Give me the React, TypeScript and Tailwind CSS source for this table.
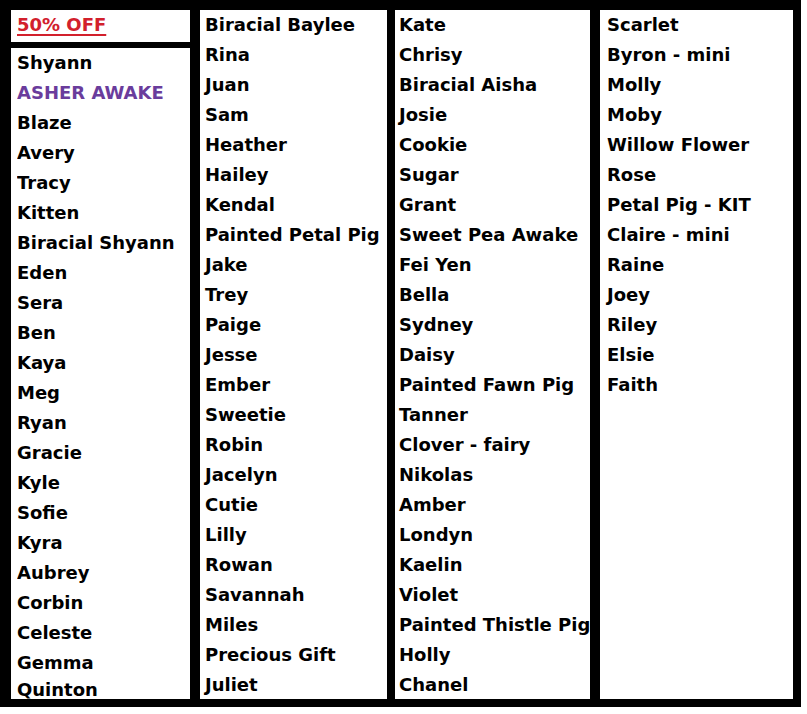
const col1 = ['Shyann', 'ASHER AWAKE', 'Blaze', 'Avery', 'Tracy', 'Kitten', 'Biracial Shyann', 'Eden', 'Sera', 'Ben', 'Kaya', 'Meg', 'Ryan', 'Gracie', 'Kyle', 'Sofie', 'Kyra', 'Aubrey', 'Corbin', 'Celeste', 'Gemma', 'Quinton']
const col2 = ['Biracial Baylee', 'Rina', 'Juan', 'Sam', 'Heather', 'Hailey', 'Kendal', 'Painted Petal Pig', 'Jake', 'Trey', 'Paige', 'Jesse', 'Ember', 'Sweetie', 'Robin', 'Jacelyn', 'Cutie', 'Lilly', 'Rowan', 'Savannah', 'Miles', 'Precious Gift', 'Juliet']
const col3 = ['Kate', 'Chrisy', 'Biracial Aisha', 'Josie', 'Cookie', 'Sugar', 'Grant', 'Sweet Pea Awake', 'Fei Yen', 'Bella', 'Sydney', 'Daisy', 'Painted Fawn Pig', 'Tanner', 'Clover - fairy', 'Nikolas', 'Amber', 'Londyn', 'Kaelin', 'Violet', 'Painted Thistle Pig', 'Holly', 'Chanel']
const col4 = ['Scarlet', 'Byron - mini', 'Molly', 'Moby', 'Willow Flower', 'Rose', 'Petal Pig - KIT', 'Claire - mini', 'Raine', 'Joey', 'Riley', 'Elsie', 'Faith']

function Names({ items, pad }: { items: string[]; pad: string }) {
  return (
    <ul className={`${pad} overflow-hidden`}>
      {items.map((n) => (
        <li
          key={n}
          className={`h-[30px] leading-[30px] whitespace-nowrap ${n === 'ASHER AWAKE' ? 'text-[#6a3c9c]' : 'text-black'}`}
        >
          {n}
        </li>
      ))}
    </ul>
  )
}

export default function App() {
  return (
    <div className="w-[807px] h-[714px] bg-white">
      <div
        className="w-[801px] h-[707px] bg-black pt-[10px] pl-[11px] pb-[8px] flex text-[18px] font-bold"
        style={{ fontFamily: '"DejaVu Sans", sans-serif' }}
      >
        {/* first column: sale header + list, last name squeezed against the bottom */}
        <div className="w-[179px] flex flex-col gap-[6px]">
          <div className="h-[32px] bg-white pl-[6px] leading-[30px]">
            <span className="text-[#d2202c] underline underline-offset-[3px] decoration-2">50% OFF</span>
          </div>
          <div className="flex-1 bg-white overflow-hidden pl-[6px]">
            <Names items={col1.slice(0, -1)} pad="" />
            <div className="h-[21px] leading-[24px] whitespace-nowrap text-black">Quinton</div>
          </div>
        </div>
        <div className="w-[187px] ml-[10px] bg-white overflow-hidden">
          <Names items={col2} pad="pl-[5px]" />
        </div>
        <div className="w-[195px] ml-[8px] bg-white overflow-hidden">
          <Names items={col3} pad="pl-[4px]" />
        </div>
        <div className="w-[193px] ml-[10px] bg-white overflow-hidden">
          <Names items={col4} pad="pl-[7px]" />
        </div>
      </div>
    </div>
  )
}
